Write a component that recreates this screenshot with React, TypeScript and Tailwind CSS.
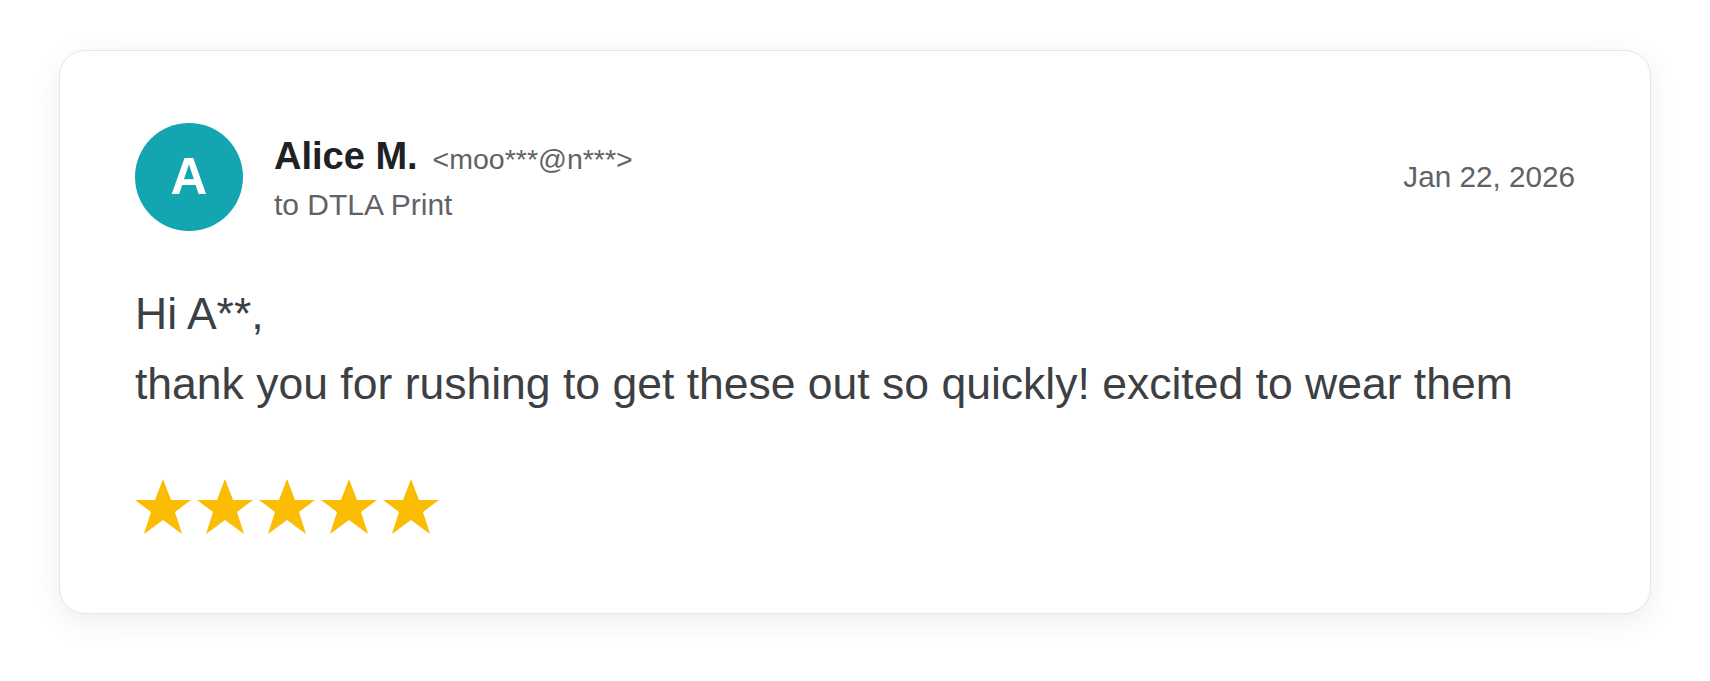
import React from 'react';

const Star = () => (
    <svg width="56" height="55" viewBox="0 0 56 55" className="shrink-0">
        <polygon points="28,0 36,21 56,21 40,33 47,55 28,41 9,55 16,33 0,21 20,21" fill="#fbbc04" />
    </svg>
);

export default function App() {
    return (
        <div className="min-h-screen bg-white px-[59px] pt-[50px]" style={{ fontFamily: '"Liberation Sans", Arial, sans-serif' }}>
            {/* review card */}
            <div className="rounded-[26px] border border-[#e3e6ea] bg-white px-[75px] pb-[79px] pt-[72px] shadow-[0_8px_30px_rgba(0,0,0,0.07)]">
                <div className="flex items-center">
                    <div className="flex size-[108px] shrink-0 items-center justify-center rounded-full bg-[#13a5b0] text-[51px] font-bold text-white">
                        A
                    </div>
                    <div className="ml-[31px] flex-1">
                        <div className="flex items-baseline leading-[48px]">
                            <span className="text-[38px] font-bold text-[#202124]">Alice M.</span>
                            <span className="ml-[15px] text-[28.5px] text-[#5f6368]">&lt;moo***@n***&gt;</span>
                        </div>
                        <div className="mt-1 text-[30px] leading-[36px] text-[#5f6368]">to DTLA Print</div>
                    </div>
                    <div className="text-[29.7px] text-[#5f6368]">Jan 22, 2026</div>
                </div>

                <div className="mt-[48px] text-[44.5px] leading-[70px] text-[#3c4043]">
                    <p>Hi A**,</p>
                    <p>thank you for rushing to get these out so quickly! excited to wear them</p>
                </div>

                <div className="mt-[60px] flex gap-[6px]">
                    <Star />
                    <Star />
                    <Star />
                    <Star />
                    <Star />
                </div>
            </div>
        </div>
    );
}
